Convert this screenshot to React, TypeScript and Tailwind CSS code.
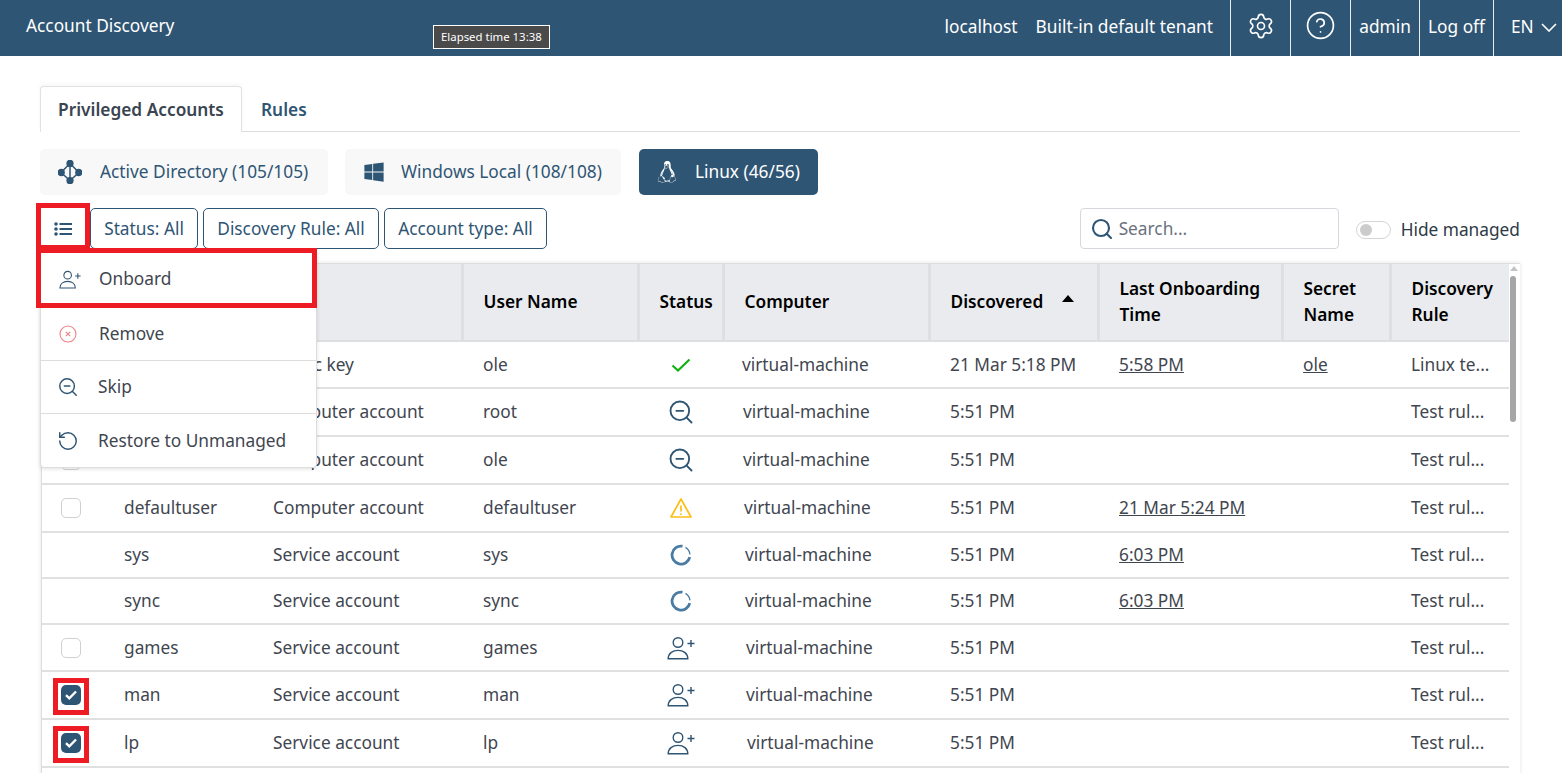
import { CircleHelp, RotateCcw, Search, Settings, ZoomOut } from "lucide-react"
import { FaLinux, FaWindows } from "react-icons/fa"

const accent = "#2f5574"

interface Row {
  check: "none" | "empty" | "checked"
  account: string
  type: string
  user: string
  status: "ok" | "skip" | "warn" | "spin" | "onboard"
  computerPad: string
  discovered: string
  onboarding: string
  secret: string
  rule: string
  height: string
}

const rows: Row[] = [
  { check: "none", account: "", type: "Public key", user: "ole", status: "ok", computerPad: "pl-[19px]", discovered: "21 Mar 5:18 PM", onboarding: "5:58 PM", secret: "ole", rule: "Linux te...", height: "h-[47px]" },
  { check: "none", account: "", type: "Computer account", user: "root", status: "skip", computerPad: "pl-[20px]", discovered: "5:51 PM", onboarding: "", secret: "", rule: "Test rul...", height: "h-[48px]" },
  { check: "empty", account: "oleksii", type: "Computer account", user: "ole", status: "skip", computerPad: "pl-[20px]", discovered: "5:51 PM", onboarding: "", secret: "", rule: "Test rul...", height: "h-[48px]" },
  { check: "empty", account: "defaultuser", type: "Computer account", user: "defaultuser", status: "warn", computerPad: "pl-[21px]", discovered: "5:51 PM", onboarding: "21 Mar 5:24 PM", secret: "", rule: "Test rul...", height: "h-[48px]" },
  { check: "none", account: "sys", type: "Service account", user: "sys", status: "spin", computerPad: "pl-[22px]", discovered: "5:51 PM", onboarding: "6:03 PM", secret: "", rule: "Test rul...", height: "h-[46px]" },
  { check: "none", account: "sync", type: "Service account", user: "sync", status: "spin", computerPad: "pl-[22px]", discovered: "5:51 PM", onboarding: "6:03 PM", secret: "", rule: "Test rul...", height: "h-[46px]" },
  { check: "empty", account: "games", type: "Service account", user: "games", status: "onboard", computerPad: "pl-[23px]", discovered: "5:51 PM", onboarding: "", secret: "", rule: "Test rul...", height: "h-[47px]" },
  { check: "checked", account: "man", type: "Service account", user: "man", status: "onboard", computerPad: "pl-[23px]", discovered: "5:51 PM", onboarding: "", secret: "", rule: "Test rul...", height: "h-[48px]" },
  { check: "checked", account: "lp", type: "Service account", user: "lp", status: "onboard", computerPad: "pl-[24px]", discovered: "5:51 PM", onboarding: "", secret: "", rule: "Test rul...", height: "h-[48px]" },
]

function OnboardIcon({ className }: { className?: string }) {
  return (
    <svg viewBox="0 0 28 24" fill="none" stroke={accent} strokeWidth="1.4" className={className}>
      <circle cx="11" cy="6.5" r="4.8" />
      <path d="M1.2 22.8c0-5.2 4.2-8.4 9.8-8.4s9.8 3.2 9.8 8.4z" />
      <path d="M20.5 7.5h7M24 4v7" />
    </svg>
  )
}

function AdIcon() {
  return (
    <svg viewBox="0 0 24 24" className="h-[24px] w-[24px]" fill="none" stroke={accent} strokeWidth="1.5">
      <path d="M12 3.5v17M12 3.5 3 12.5 12 20.5l9-8z" />
      <circle cx="12" cy="3.4" r="2.9" fill={accent} />
      <circle cx="12" cy="20.6" r="2.9" fill={accent} />
      <circle cx="3.2" cy="12.5" r="2.9" fill={accent} />
      <circle cx="20.8" cy="12.5" r="2.9" fill={accent} />
    </svg>
  )
}

function StatusIcon({ status }: { status: Row["status"] }) {
  if (status === "ok") {
    return (
      <svg viewBox="0 0 20 16" className="h-4 w-5" fill="none" stroke="#12b012" strokeWidth="2.2">
        <path d="M1.5 8.5 7 13.5 18.5 2.5" />
      </svg>
    )
  }
  if (status === "skip") return <ZoomOut className="h-7 w-7 text-[#2f5574]" strokeWidth={1.6} />
  if (status === "warn") {
    return (
      <svg viewBox="0 0 24 22" className="h-[22px] w-6" fill="none" stroke="#fdbd13" strokeWidth="1.7" strokeLinejoin="round">
        <path d="M12 2 2 20h20z" />
        <path d="M12 8.5v6M12 16.5v1.6" />
      </svg>
    )
  }
  if (status === "spin") {
    return (
      <svg viewBox="0 0 22 22" className="h-[22px] w-[22px]" fill="none" stroke="#4a7ba3" strokeWidth="2.8">
        <path d="M12.5 2.2a9 9 0 1 0 7.3 11" />
        <path d="M15.5 3.4a9 9 0 0 1 4.4 7" strokeWidth="1.3" />
      </svg>
    )
  }
  return <OnboardIcon className="h-6 w-7" />
}

function Check({ state }: { state: Row["check"] }) {
  if (state === "none") return null
  if (state === "empty") return <div className="h-5 w-5 rounded-[5px] border border-[#d0d0d0] bg-white" />
  return (
    <div className="flex h-5 w-5 items-center justify-center rounded-[5px] bg-[#2f5574]">
      <svg viewBox="0 0 12 10" className="h-2.5 w-3" fill="none" stroke="white" strokeWidth="2.4">
        <path d="M1 5.2 4.3 8.3 11 1.5" />
      </svg>
    </div>
  )
}

function HeadCell({ children, width }: { children?: React.ReactNode; width: string }) {
  return (
    <th className={`${width} border-r-[3px] border-[#dddfe1] pl-5 pr-2 text-left align-middle font-semibold leading-[26px] text-black last:border-r-0`}>
      {children}
    </th>
  )
}

export default function App() {
  return (
    <div className="relative h-[773px] w-[1562px] overflow-hidden bg-white text-[17.3px] text-[#3f4650] [font-family:'Noto_Sans',sans-serif]">
      {/* Header */}
      <header className="flex h-14 items-stretch justify-between bg-[#2f5574] text-white">
        <div className="flex items-center pb-1 pl-[26px]">Account Discovery</div>
        <div className="flex items-stretch">
          <div className="flex items-center gap-[18px] pb-0.5 pr-[17px]">
            <span>localhost</span>
            <span>Built-in default tenant</span>
          </div>
          <div className="flex w-[60px] items-center justify-center border-l border-white/90 pb-1"><Settings className="h-7 w-7 shrink-0" strokeWidth={1.4} /></div>
          <div className="flex w-[60px] items-center justify-center border-l border-white/90 pb-1.5"><CircleHelp className="h-[31px] w-[31px] shrink-0" strokeWidth={1.3} /></div>
          <div className="flex w-[69px] items-center justify-center border-l border-white/90 pb-0.5">admin</div>
          <div className="flex w-[74px] items-center justify-center border-l border-white/90 pb-0.5">Log off</div>
          <div className="flex w-[69px] items-center gap-[7px] border-l border-white/90 pb-0.5 pl-[17px]">
            EN
            <svg viewBox="0 0 16 9" className="h-[9px] w-4 shrink-0" fill="none" stroke="white" strokeWidth="1.6"><path d="M1 1l7 7 7-7" /></svg>
          </div>
        </div>
      </header>

      <div className="absolute left-[433px] top-[25px] border border-white bg-[#4a4a4a] px-[7px] py-[3px] text-[11.4px] leading-[16px] text-white">Elapsed time 13:38</div>

      <main className="pl-10 pr-[42px] pt-[30px]">
        {/* Tabs */}
        <div className="flex h-[46px] items-stretch border-b border-[#dddddd]">
          <div className="-mb-px flex w-[202px] items-center justify-center rounded-t-[4px] border border-b-0 border-[#e2e2e2] bg-white font-semibold text-[#3a4450] shadow-[0_-2px_4px_rgba(0,0,0,0.04)]">Privileged Accounts</div>
          <div className="flex items-center pl-[19px] pt-0.5 font-semibold text-[#2f5574]">Rules</div>
        </div>

        {/* Account type switch */}
        <div className="mt-[17px] flex h-[46px] gap-[17px] text-[#2f5574]">
          <div className="flex w-[288px] items-center gap-[18px] rounded-[5px] bg-[#f8f8f8] pl-[18px]"><AdIcon />Active Directory (105/105)</div>
          <div className="flex w-[276px] items-center gap-[16px] rounded-[5px] bg-[#f8f8f8] pl-[18px]"><FaWindows className="h-[22px] w-[22px]" />Windows Local (108/108)</div>
          <div className="ml-px flex w-[179px] items-center gap-[17px] rounded-[5px] bg-[#2f5574] pl-[17px] text-white"><FaLinux className="h-[22px] w-[22px]" />Linux (46/56)</div>
        </div>

        {/* Toolbar */}
        <div className="mt-[13px] flex h-[41px] items-stretch justify-between">
          <div className="flex gap-[5px] text-[#2f5574]">
            <div className="flex w-[45px] items-center justify-center rounded-[5px] bg-white">
              <svg viewBox="0 0 18 14" className="h-3.5 w-[18px]" fill={accent}>
                <circle cx="2" cy="2" r="1.8" /><circle cx="2" cy="7" r="1.8" /><circle cx="2" cy="12" r="1.8" />
                <rect x="5.5" y="1" width="12.5" height="2" /><rect x="5.5" y="6" width="12.5" height="2" /><rect x="5.5" y="11" width="12.5" height="2" />
              </svg>
            </div>
            <div className="flex w-[108px] items-center justify-center rounded-[5px] border border-[#2f5574]">Status: All</div>
            <div className="flex w-[176px] items-center justify-center rounded-[5px] border border-[#2f5574]">Discovery Rule: All</div>
            <div className="flex w-[163px] items-center justify-center rounded-[5px] border border-[#2f5574]">Account type: All</div>
          </div>
          <div className="flex items-center">
            <div className="flex h-[41px] w-[259px] items-center gap-[5px] rounded-[4px] border border-[#d4d8dd] pl-[9px] text-[#6b7280]">
              <Search className="h-6 w-6 text-[#2f5574]" strokeWidth={2.1} />Search...
            </div>
            <div className="ml-[17px] mt-0.5 flex h-[18px] w-[35px] items-center rounded-full border border-[#d4d4d4] pl-[3px]"><div className="h-3 w-3 rounded-full bg-[#cccccc]" /></div>
            <span className="ml-[10px] mt-0.5 text-[#2e3a46]">Hide managed</span>
          </div>
        </div>

        {/* Table */}
        <div className="relative ml-px mt-[14px] flex h-[520px] border-l border-t border-[#dddddd] shadow-[0_0_4px_rgba(0,0,0,0.12)]">
          <table className="h-fit w-[1467px] shrink-0 table-fixed border-collapse">
            <thead>
              <tr className="h-[77px] border-b-2 border-[#dddfe1] bg-[#e9ebee]">
                <HeadCell width="w-[420px]" />
                <HeadCell width="w-[176px]">User Name</HeadCell>
                <HeadCell width="w-[85px]">Status</HeadCell>
                <HeadCell width="w-[206px]">Computer</HeadCell>
                <HeadCell width="w-[169px]">
                  <span className="flex items-center gap-[19px]">Discovered<svg viewBox="0 0 12 7" className="mb-2 h-[7px] w-3" fill="black"><path d="M6 0 12 7H0z" /></svg></span>
                </HeadCell>
                <HeadCell width="w-[184px]">Last Onboarding Time</HeadCell>
                <HeadCell width="w-[108px]">Secret Name</HeadCell>
                <HeadCell width="w-[119px]">Discovery Rule</HeadCell>
              </tr>
            </thead>
            <tbody>
              {rows.map((row, i) => (
                <tr key={i} className={`${row.height} border-b-2 border-[#e0e0e0]`}>
                  <td className="p-0">
                    <div className="flex items-center">
                      <div className="w-[82px] pl-[19px]"><Check state={row.check} /></div>
                      <div className="w-[149px]">{row.account}</div>
                      <div>{row.type}</div>
                    </div>
                  </td>
                  <td className="px-[21px]">{row.user}</td>
                  <td className="p-0"><div className="flex justify-center"><StatusIcon status={row.status} /></div></td>
                  <td className={`${row.computerPad} whitespace-nowrap`}>virtual-machine</td>
                  <td className="whitespace-nowrap pl-[21px]">{row.discovered}</td>
                  <td className="whitespace-nowrap pl-[21px] underline">{row.onboarding}</td>
                  <td className="pl-[21px] underline">{row.secret}</td>
                  <td className="whitespace-nowrap pl-[21px]">{row.rule}</td>
                </tr>
              ))}
            </tbody>
          </table>
          {/* Scrollbar */}
          <div className="relative w-[10px] flex-1">
            <svg viewBox="0 0 8 5" className="absolute left-[1px] top-[2px] h-[5px] w-2" fill="#c4c4c4"><path d="M4 0 8 5H0z" /></svg>
            <div className="absolute left-[1px] top-3 h-[146px] w-[6px] rounded-full bg-[#a6a6a6]" />
          </div>
        </div>
      </main>

      {/* Actions menu */}
      <div className="absolute left-10 top-[251px] w-[277px] rounded-b-[4px] border border-[#dddddd] bg-white shadow-[0_1px_4px_rgba(0,0,0,0.12)]">
        <div className="flex h-[54px] items-center gap-[18px] pl-[18px]"><OnboardIcon className="h-[19px] w-[22px]" /><span>Onboard</span></div>
        <div className="flex h-[54px] items-center gap-[22px] border-t border-[#dddddd] pl-[18px]">
          <svg viewBox="0 0 18 18" className="h-[18px] w-[18px]" fill="none" stroke="#f07f86" strokeWidth="1.1">
            <circle cx="9" cy="9" r="8" /><path d="M6.8 6.8l4.4 4.4M11.2 6.8l-4.4 4.4" />
          </svg>
          <span>Remove</span>
        </div>
        <div className="flex h-[53px] items-center gap-[19px] border-t border-[#dddddd] pl-[16px]"><ZoomOut className="h-[22px] w-[22px] text-[#2f5574]" strokeWidth={1.6} /><span>Skip</span></div>
        <div className="flex h-[54px] items-center gap-[19px] border-t border-[#dddddd] pl-[16px]"><RotateCcw className="h-[22px] w-[22px] text-[#2f5574]" strokeWidth={1.6} /><span>Restore to Unmanaged</span></div>
      </div>

      {/* Annotation boxes */}
      <div className="absolute left-9 top-[203px] h-[47px] w-[54px] border-[5px] border-[#ed1c24]" />
      <div className="absolute left-9 top-[248px] h-[60px] w-[281px] border-[5px] border-[#ed1c24]" />
      <div className="absolute left-[53px] top-[678px] h-[37px] w-9 border-[5px] border-[#ed1c24]" />
      <div className="absolute left-[53px] top-[726px] h-[37px] w-9 border-[5px] border-[#ed1c24]" />
    </div>
  )
}
